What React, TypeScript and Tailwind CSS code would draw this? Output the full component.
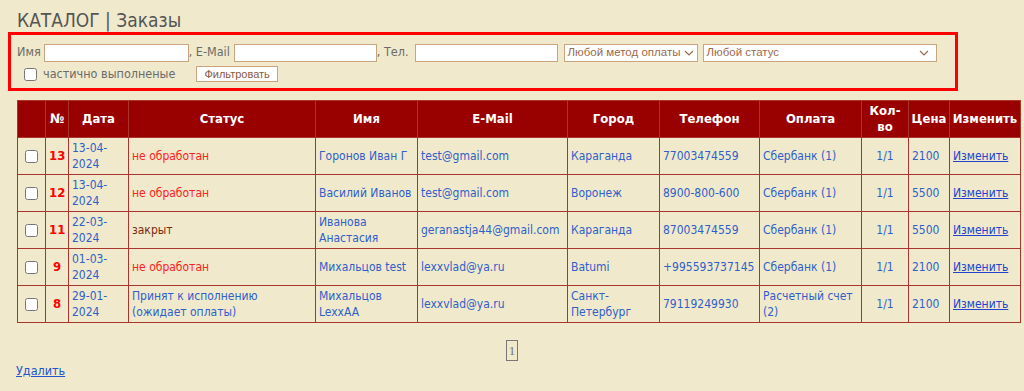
import React from 'react'

interface Order {
  id: number
  date: string
  status: string
  statusKind: 'new' | 'closed' | 'accepted'
  name: string
  email: string
  city: string
  phone: string
  payment: string
  qty: string
  price: number
}

const orders: Order[] = [
  { id: 13, date: '13-04-2024', status: 'не обработан', statusKind: 'new', name: 'Горонов Иван Г', email: 'test@gmail.com', city: 'Караганда', phone: '77003474559', payment: 'Сбербанк (1)', qty: '1/1', price: 2100 },
  { id: 12, date: '13-04-2024', status: 'не обработан', statusKind: 'new', name: 'Василий Иванов', email: 'test@gmail.com', city: 'Воронеж', phone: '8900-800-600', payment: 'Сбербанк (1)', qty: '1/1', price: 5500 },
  { id: 11, date: '22-03-2024', status: 'закрыт', statusKind: 'closed', name: 'Иванова Анастасия', email: 'geranastja44@gmail.com', city: 'Караганда', phone: '87003474559', payment: 'Сбербанк (1)', qty: '1/1', price: 5500 },
  { id: 9, date: '01-03-2024', status: 'не обработан', statusKind: 'new', name: 'Михальцов test', email: 'lexxvlad@ya.ru', city: 'Batumi', phone: '+995593737145', payment: 'Сбербанк (1)', qty: '1/1', price: 2100 },
  { id: 8, date: '29-01-2024', status: 'Принят к исполнению (ожидает оплаты)', statusKind: 'accepted', name: 'Михальцов LexxAA', email: 'lexxvlad@ya.ru', city: 'Санкт-Петербург', phone: '79119249930', payment: 'Расчетный счет (2)', qty: '1/1', price: 2100 },
]

const statusColor = {
  new: 'text-[#ff2020]',
  closed: 'text-[#7a2a10]',
  accepted: 'text-[#2f5fc8]',
}

export default function App() {
  const td = 'border border-[#a8362c] px-[3px] py-[2px] align-middle leading-[16px]'
  const th = 'border border-[#a8362c] px-[2px] py-[1px] text-white font-bold text-[13px] leading-[16px]'

  return (
    <div className="min-h-[391px] bg-[#f0e9cc] font-['DejaVu_Sans_Condensed','DejaVu_Sans',sans-serif] text-[12.5px] pt-[8px] pb-[12px]">
      <h1 className="ml-[17px] text-[19px] leading-[24px] text-[#555]">
        КАТАЛОГ | Заказы
      </h1>

      {/* filter box */}
      <div className="ml-[8px] w-[950px] h-[59px] border-[3px] border-[#ff0000] px-[6px] pt-[8px] text-[#6b6b6b]">
        <div className="flex items-center h-[19px]">
          <span>Имя</span>
          <input className="ml-[3px] w-[145px] h-[18px] bg-white border border-[#c9a47e]" />
          <span>, E-Mail</span>
          <input className="ml-[4px] w-[143px] h-[18px] bg-white border border-[#c9a47e]" />
          <span>, Тел.</span>
          <input className="ml-[6px] w-[143px] h-[18px] bg-white border border-[#c9a47e]" />
          <div className="ml-[6px] w-[134px] h-[18px] bg-white border border-[#c9a47e] flex items-center justify-between px-[3px] font-['Liberation_Sans',sans-serif] text-[11.5px] text-[#9a6a4c]">
            <span>Любой метод оплаты</span>
            <svg width="10" height="6" viewBox="0 0 10 6" fill="none" stroke="#9a6a4c" strokeWidth="1.2"><path d="M1 1l4 4 4-4" /></svg>
          </div>
          <div className="ml-[5px] w-[234px] h-[18px] bg-white border border-[#c9a47e] flex items-center justify-between px-[3px] pr-[7px] font-['Liberation_Sans',sans-serif] text-[11.5px] text-[#9a6a4c]">
            <span>Любой статус</span>
            <svg width="10" height="6" viewBox="0 0 10 6" fill="none" stroke="#9a6a4c" strokeWidth="1.2"><path d="M1 1l4 4 4-4" /></svg>
          </div>
        </div>
        <div className="flex items-center mt-[3px]">
          <input type="checkbox" className="ml-[7px] w-[13px] h-[13px]" />
          <span className="ml-[6px]">частично выполненые</span>
          <button className="ml-[21px] h-[16px] px-[7px] bg-white border border-[#c9a47e] text-[#8b5a3c] text-[11px] leading-[14px] font-['Liberation_Sans',sans-serif]">
            Фильтровать
          </button>
        </div>
      </div>

      <table className="ml-[17px] mt-[9px] w-[1003px] border-collapse table-fixed text-[12px]">
        <colgroup>
          <col className="w-[28px]" />
          <col className="w-[23px]" />
          <col className="w-[60px]" />
          <col className="w-[187px]" />
          <col className="w-[102px]" />
          <col className="w-[150px]" />
          <col className="w-[92px]" />
          <col className="w-[100px]" />
          <col className="w-[102px]" />
          <col className="w-[47px]" />
          <col className="w-[41px]" />
          <col className="w-[71px]" />
        </colgroup>
        <thead>
          <tr className="bg-[#990000] h-[37px]">
            <th className={th}></th>
            <th className={th}>№</th>
            <th className={th}>Дата</th>
            <th className={th}>Статус</th>
            <th className={th}>Имя</th>
            <th className={th}>E-Mail</th>
            <th className={th}>Город</th>
            <th className={th}>Телефон</th>
            <th className={th}>Оплата</th>
            <th className={th}>Кол-<br />во</th>
            <th className={th}>Цена</th>
            <th className={th}>Изменить</th>
          </tr>
        </thead>
        <tbody className="text-[#2f5fc8]">
          {orders.map(o => (
            <tr key={o.id} className="h-[37px]">
              <td className={`${td} text-center`}>
                <input type="checkbox" className="w-[13px] h-[13px] align-middle" />
              </td>
              <td className={`${td} text-[#ff0000] font-bold text-[13px] text-center`}>{o.id}</td>
              <td className={td}>{o.date.slice(0, 6)}<br />{o.date.slice(6)}</td>
              <td className={`${td} ${statusColor[o.statusKind]}`}>{o.status}</td>
              <td className={td}>{o.name}</td>
              <td className={td}>{o.email}</td>
              <td className={td}>{o.city}</td>
              <td className={td}>{o.phone}</td>
              <td className={td}>{o.payment}</td>
              <td className={`${td} text-center`}>{o.qty}</td>
              <td className={td}>{o.price}</td>
              <td className={td}>
                <a href="#" className="underline text-[#2244cc]">Изменить</a>
              </td>
            </tr>
          ))}
        </tbody>
      </table>

      <div className="flex justify-center mt-[17px]">
        <span className="border border-[#777] px-[2px] h-[21px] leading-[19px] text-[#777] font-['Liberation_Serif',serif] text-[13px]">1</span>
      </div>

      <a href="#" className="block ml-[16px] mt-[1px] underline text-[#2255cc] w-fit">Удалить</a>
    </div>
  )
}
